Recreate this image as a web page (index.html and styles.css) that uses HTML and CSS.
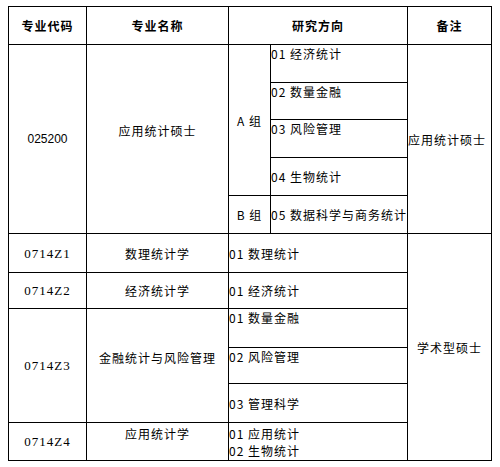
FILE: index.html
```html
<!DOCTYPE html>
<html lang="zh">
<head>
<meta charset="utf-8">
<title>专业目录</title>
<link rel="stylesheet" href="styles.css">
</head>
<body>
<table class="majors">
  <colgroup>
    <col class="c-code">
    <col class="c-name">
    <col class="c-group">
    <col class="c-dir">
    <col class="c-note">
  </colgroup>
  <thead>
    <tr class="h38">
      <th>专业代码</th>
      <th>专业名称</th>
      <th colspan="2">研究方向</th>
      <th>备注</th>
    </tr>
  </thead>
  <tbody>
    <tr class="h38">
      <td rowspan="5" class="code sans">025200</td>
      <td rowspan="5" class="name lift">应用统计硕士</td>
      <td rowspan="4" class="group">A 组</td>
      <td class="dir top">01 经济统计</td>
      <td rowspan="5" class="note">应用统计硕士</td>
    </tr>
    <tr class="h37"><td class="dir top">02 数量金融</td></tr>
    <tr class="h38"><td class="dir top">03 风险管理</td></tr>
    <tr class="h38"><td class="dir">04 生物统计</td></tr>
    <tr class="h38">
      <td class="group">B 组</td>
      <td class="dir">05 数据科学与商务统计</td>
    </tr>
    <tr class="h39">
      <td class="code">0714Z1</td>
      <td class="name">数理统计学</td>
      <td colspan="2" class="dir">01 数理统计</td>
      <td rowspan="6" class="note center">学术型硕士</td>
    </tr>
    <tr class="h36">
      <td class="code">0714Z2</td>
      <td class="name">经济统计学</td>
      <td colspan="2" class="dir">01 经济统计</td>
    </tr>
    <tr class="h39">
      <td rowspan="3" class="code">0714Z3</td>
      <td rowspan="3" class="name lift">金融统计与风险管理</td>
      <td colspan="2" class="dir top">01 数量金融</td>
    </tr>
    <tr class="h36"><td colspan="2" class="dir top">02 风险管理</td></tr>
    <tr class="h39"><td colspan="2" class="dir">03 管理科学</td></tr>
    <tr class="h38">
      <td class="code">0714Z4</td>
      <td class="name lift">应用统计学</td>
      <td colspan="2" class="dir">01 应用统计<br>02 生物统计</td>
    </tr>
  </tbody>
</table>
</body>
</html>
```
FILE: styles.css
```css
html, body {
  background: #ffffff;
}
body {
  margin: 6px 0 0 8px;
  color: #000000;
  font-family: "Noto Sans CJK SC", "Noto Sans", sans-serif;
  font-size: 12px;
}
.majors {
  border-collapse: collapse;
  table-layout: fixed;
  width: 484px;
}
.c-code { width: 78px; }
.c-name { width: 142px; }
.c-group { width: 42px; }
.c-dir { width: 137px; }
.c-note { width: 84px; }

.h36 { height: 36px; }
.h37 { height: 37px; }
.h38 { height: 38px; }
.h39 { height: 39px; }

.majors th,
.majors td {
  border: 1px solid #000000;
  padding: 0;
  line-height: 17px;
  letter-spacing: 1px;
  white-space: nowrap;
  vertical-align: middle;
  overflow: hidden;
}
.majors th {
  font-weight: bold;
  text-align: center;
}
.code {
  text-align: center;
  font-family: "Liberation Serif", "Noto Sans CJK SC", serif;
  font-size: 13px;
  letter-spacing: 0.5px;
}
.code.sans {
  font-family: "Liberation Sans", sans-serif;
  font-size: 12px;
  letter-spacing: 0;
}
.name {
  text-align: center;
}
.name.lift {
  padding-bottom: 17px;
}
.group {
  text-align: center;
}
.dir {
  text-align: left;
}
.dir.top {
  vertical-align: top;
}
.note {
  text-align: left;
  padding-left: 1px;
}
.note.center {
  text-align: center;
}
```
